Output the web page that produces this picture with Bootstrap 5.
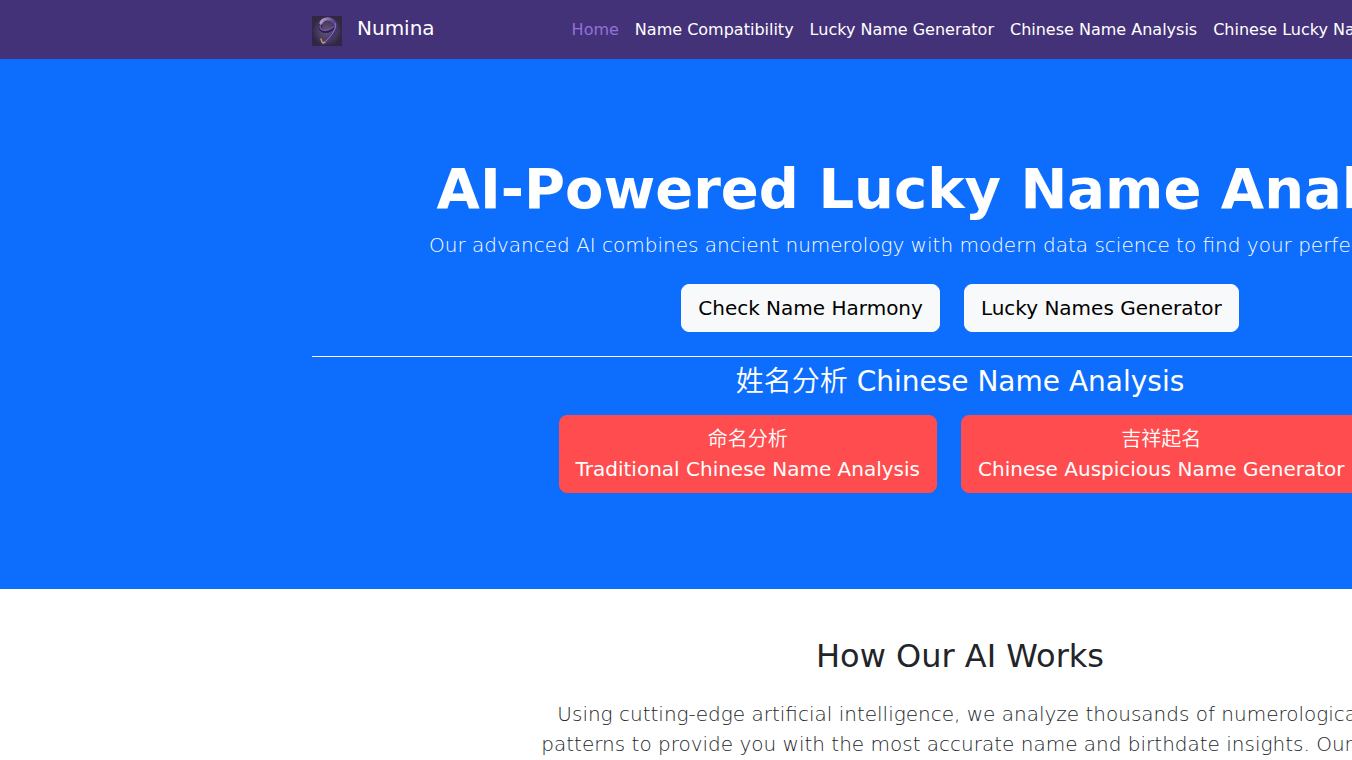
<!DOCTYPE html>
<html lang="en">
<head>
<meta charset="utf-8">
<meta name="viewport" content="width=device-width, initial-scale=1">
<title>Numina</title>
<link href="https://cdn.jsdelivr.net/npm/bootstrap@5.3.0/dist/css/bootstrap.min.css" rel="stylesheet">
<style>
  body {
    font-family: "DejaVu Sans", "Noto Sans CJK SC", sans-serif;
    min-width: 1920px;
    color: #212529;
  }
  .container { max-width: 1320px; }
  .site-nav { background: #443278; }
  .site-nav .navbar-brand { font-size: 20px; line-height: 30px; gap: 15px; color: #fff; }
  .site-nav .brand-logo { width: 30px; height: 30px; margin-top: 3px; }
  .site-nav .navbar-nav { margin-left: 113px; }
  .site-nav .nav-link { color: #fff; line-height: 26px; white-space: nowrap; }
  .site-nav .nav-link.active { color: #9370db; }
  .hero { padding: 96px 0; }
  .hero-title { font-size: 56px; font-weight: 700; line-height: 67px; }
  .hero .lead, .works .lead { font-size: 20px; line-height: 30px; }
  .hero-chinese { border-top: 1px solid #fff; }
  .hero-chinese h2 { font-size: 28px; line-height: 34px; font-weight: 400; }
  .hanzi { font-family: "Noto Sans CJK SC", sans-serif; font-weight: 350; line-height: 1; }
  .btn-fortune { --bs-btn-bg: #ff4d4f; --bs-btn-color: #fff; --bs-btn-border-color: #ff4d4f; --bs-btn-hover-bg: #e64547; --bs-btn-hover-color: #fff; }
  .works h2 { font-size: 32px; line-height: 38px; }
</style>
</head>
<body>
<nav class="navbar navbar-expand-lg site-nav">
  <div class="container justify-content-start">
    <a class="navbar-brand d-flex" href="#">
      <svg class="brand-logo" viewBox="0 0 30 30" aria-hidden="true">
        <defs>
          <radialGradient id="logoBack"><stop offset="0" stop-color="#66577a"/><stop offset=".6" stop-color="#483c60"/><stop offset="1" stop-color="#302842"/></radialGradient>
          <linearGradient id="logoStroke" x1="0" y1="0" x2="1" y2="1"><stop offset="0" stop-color="#c4a2ce"/><stop offset=".4" stop-color="#66509a"/><stop offset="1" stop-color="#2a1c5c"/></linearGradient>
        </defs>
        <rect width="30" height="30" fill="url(#logoBack)"/>
        <path d="M12 4C7 7 7 13 11 15c5 2 10-2 12-6" fill="none" stroke="#2a1e50" stroke-width="3"/>
        <path d="M11 5C7 8 7 13 11 14c4 1 8-1 11-4" fill="none" stroke="#745a9c" stroke-width="1.4"/>
        <path d="M9 7c2-5 9-5 12-2 5 5 2 12-2 16-3 3-4 5-8 6" fill="none" stroke="url(#logoStroke)" stroke-width="3.2" stroke-linecap="round"/>
        <path d="M23 7c2 6-3 12-9 18" fill="none" stroke="#9c8dc8" stroke-width=".8"/>
        <path d="M9 23l1 3c1 1 2 1 3 0" fill="none" stroke="#c99a72" stroke-width="1.4" stroke-linecap="round"/>
      </svg>
      <span>Numina</span>
    </a>
    <ul class="navbar-nav">
      <li class="nav-item"><a class="nav-link active" aria-current="page" href="#">Home</a></li>
      <li class="nav-item"><a class="nav-link" href="#">Name Compatibility</a></li>
      <li class="nav-item"><a class="nav-link" href="#">Lucky Name Generator</a></li>
      <li class="nav-item"><a class="nav-link" href="#">Chinese Name Analysis</a></li>
      <li class="nav-item"><a class="nav-link" href="#">Chinese Lucky Name</a></li>
    </ul>
  </div>
</nav>

<header class="hero bg-primary text-white text-center">
  <div class="container">
    <h1 class="hero-title mb-2">AI-Powered Lucky Name Analysis</h1>
    <p class="lead mb-4">Our advanced AI combines ancient numerology with modern data science to find your perfect lucky name</p>
    <div class="d-flex justify-content-center gap-4 mb-4">
      <a class="btn btn-light btn-lg" href="#">Check Name Harmony</a>
      <a class="btn btn-light btn-lg" href="#">Lucky Names Generator</a>
    </div>
    <div class="hero-chinese pt-2">
      <h2 class="mb-3"><span class="hanzi" lang="zh-Hans">姓名分析</span> Chinese Name Analysis</h2>
      <div class="d-flex justify-content-center gap-4">
        <a class="btn btn-fortune btn-lg" href="#"><span class="hanzi" lang="zh-Hans">命名分析</span><br>Traditional Chinese Name Analysis</a>
        <a class="btn btn-fortune btn-lg" href="#"><span class="hanzi" lang="zh-Hans">吉祥起名</span><br>Chinese Auspicious Name Generator</a>
      </div>
    </div>
  </div>
</header>

<section class="works py-5">
  <div class="container text-center">
    <h2 class="mb-4">How Our AI Works</h2>
    <div class="row justify-content-center">
      <div class="col-8">
        <p class="lead mb-0">Using cutting-edge artificial intelligence, we analyze thousands of numerological patterns to provide you with the most accurate name and birthdate insights. Our AI</p>
      </div>
    </div>
  </div>
</section>
<script src="https://cdn.jsdelivr.net/npm/bootstrap@5.3.0/dist/js/bootstrap.bundle.min.js"></script>
</body>
</html>
